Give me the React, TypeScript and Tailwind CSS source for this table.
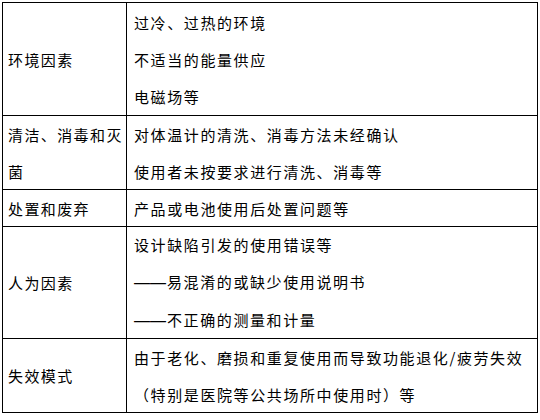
import React from 'react';

type Row = {
  label: string[];
  items: string[];
  height: string;
};

const rows: Row[] = [
  {
    label: ['环境因素'],
    items: ['过冷、过热的环境', '不适当的能量供应', '电磁场等'],
    height: 'h-[112px]',
  },
  {
    label: ['清洁、消毒和灭', '菌'],
    items: ['对体温计的清洗、消毒方法未经确认', '使用者未按要求进行清洗、消毒等'],
    height: 'h-[74px]',
  },
  {
    label: ['处置和废弃'],
    items: ['产品或电池使用后处置问题等'],
    height: 'h-[37px]',
  },
  {
    label: ['人为因素'],
    items: ['设计缺陷引发的使用错误等', '——易混淆的或缺少使用说明书', '——不正确的测量和计量'],
    height: 'h-[112px]',
  },
  {
    label: ['失效模式'],
    items: ['由于老化、磨损和重复使用而导致功能退化/疲劳失效', '（特别是医院等公共场所中使用时）等'],
    height: 'h-[74px]',
  },
];

// the dashes are full width in the original; Liberation Sans draws them 1em wide
const Line: React.FC<{ text: string }> = ({ text }) => {
  if (text.startsWith('——')) {
    return (
      <div className="whitespace-nowrap">
        <span className="inline-block w-[33px] text-[16px] tracking-normal font-['Liberation_Sans']">——</span>
        {text.slice(2)}
      </div>
    );
  }
  return <div className="whitespace-nowrap">{text}</div>;
};

const App: React.FC = () => {
  return (
    <div className="w-[540px] h-[420px] bg-white pt-[2px] pl-[2px]">
      <div
        className="w-[536px] border border-black text-[15px] tracking-[1.6px] leading-[37px] text-black"
        style={{ fontFamily: '"Noto Sans CJK SC", "Noto Sans", sans-serif' }}
      >
        {rows.map((row, i) => (
          <div
            key={i}
            className={`flex ${row.height} ${i > 0 ? 'border-t border-black' : ''}`}
          >
            {/* left column */}
            <div className="w-[124px] shrink-0 border-r border-black pl-[5px] flex flex-col justify-center tracking-[1.4px]">
              {row.label.map((t, j) => (
                <Line key={j} text={t} />
              ))}
            </div>
            {/* right column */}
            <div className="flex-1 pl-[7px] flex flex-col justify-center">
              {row.items.map((t, j) => (
                <Line key={j} text={t} />
              ))}
            </div>
          </div>
        ))}
      </div>
    </div>
  );
};

export default App;
